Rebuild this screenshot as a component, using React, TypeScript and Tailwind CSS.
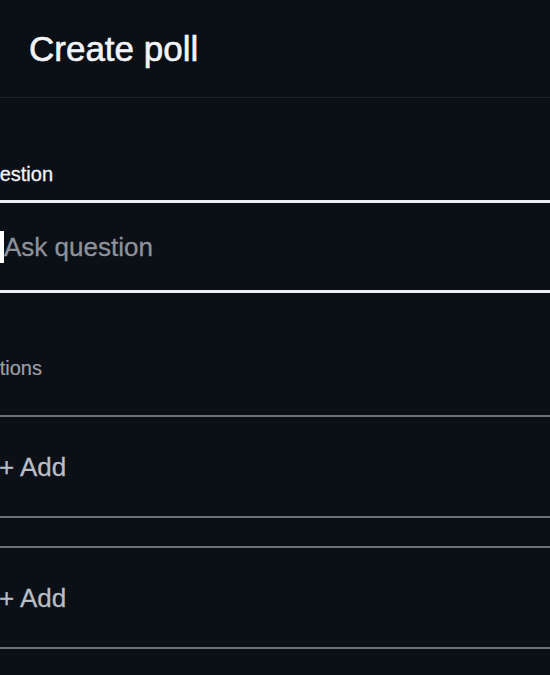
import React from 'react'

const font = { fontFamily: '"Liberation Sans", Arial, sans-serif' }

function OptionRow() {
  return (
    <div className="flex h-[103px] items-center border-y-2 border-[#6c7078] pl-[26px]">
      <span className="text-[26px] leading-[30px] text-[#b9bdc5] [-webkit-text-stroke:0.3px_#b9bdc5]">+ Add</span>
    </div>
  )
}

export default function App() {
  return (
    <main className="h-[675px] w-full overflow-hidden bg-[#0b0f16]" style={font}>
      <header className="flex h-[98px] items-center border-b border-[#1b1f27] pl-[29px]">
        <h1 className="text-[35px] leading-[40px] font-medium text-[#f3f4f6] [-webkit-text-stroke:0.6px_#f3f4f6]">Create poll</h1>
      </header>

      <section className="-ml-[27px] w-[620px] pt-[64px]">
        <label className="block text-[20px] leading-[24px] text-[#f3f4f6] [-webkit-text-stroke:0.3px_#f3f4f6]">Question</label>
        <div className="mt-[14px] flex h-[93px] items-center border-y-[3px] border-[#eef0f3] pl-[27px]">
          <span className="h-[32px] w-[4px] bg-white" />
          <span className="text-[26px] leading-[30px] text-[#8d929b] [-webkit-text-stroke:0.3px_#8d929b]">Ask question</span>
        </div>

        <label className="mt-[63px] block text-[20px] leading-[24px] text-[#9ba0a8] [-webkit-text-stroke:0.2px_#9ba0a8]">Options</label>
        <div className="mt-[35px] flex flex-col gap-[28px]">
          <OptionRow />
          <OptionRow />
        </div>
      </section>
    </main>
  )
}
